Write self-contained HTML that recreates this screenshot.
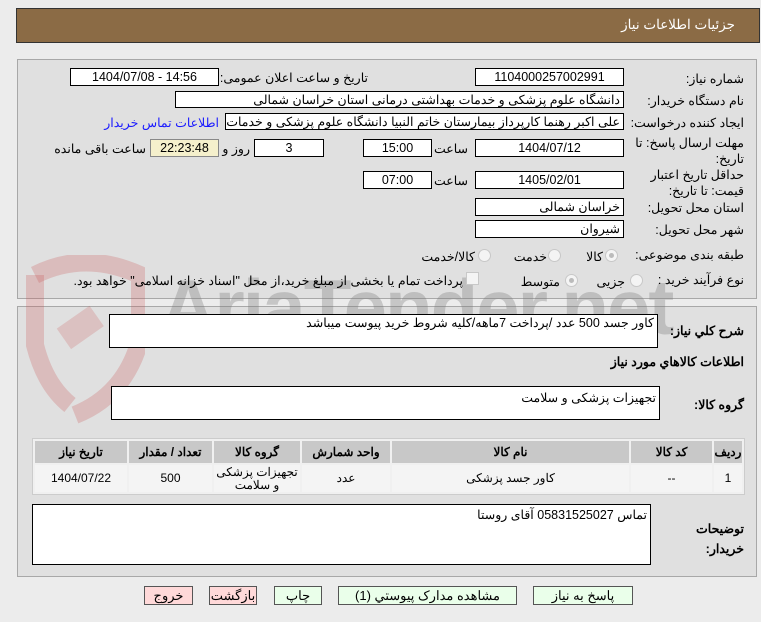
<!DOCTYPE html>
<html><head><meta charset="utf-8"><style>
body{margin:0;width:761px;height:622px;background:#ececec;font-family:Tahoma,"Liberation Sans","Noto Sans CJK SC",sans-serif;font-size:12.5px;color:#000;position:relative;overflow:hidden}
.a{position:absolute}
.lbl{position:absolute;direction:rtl;text-align:right;white-space:nowrap}
.box{position:absolute;background:#fff;border:1px solid #000;box-sizing:border-box;direction:rtl;text-align:center;line-height:16px;white-space:nowrap;overflow:hidden}
.r{text-align:right;padding-right:3px}
.panel{position:absolute;left:17px;width:740px;background:#e0e0e0;border:1px solid #a8a8a8;box-sizing:border-box}
.rad{position:absolute;width:11px;height:11px;border-radius:50%;border:1px solid #c8c8c8;background:#f4f4f4}
.rad.on:after{content:"";position:absolute;left:3px;top:3px;width:5px;height:5px;border-radius:50%;background:#bbb}
table{position:absolute;border-collapse:separate;border-spacing:2px;background:#f0f0f0;border:1px solid #ccc;direction:rtl}
th{background:#c8c8c8;font-weight:bold;height:22px;padding:0;font-size:12px}
td{background:#f4f4f4;text-align:center;height:27px;padding:0;font-size:12px;line-height:13px}
.btn{position:absolute;top:586px;height:19px;border:1px solid #555;box-sizing:border-box;background:#eaffea;text-align:center;line-height:17px;direction:rtl;font-size:13px}
.pink{background:#ffd9d9}
</style></head><body>
<div class="a" style="left:16px;top:8px;width:744px;height:35px;background:#8b6b45;border:1px solid #333;box-sizing:border-box"></div>
<div class="lbl" style="right:26px;top:17px;color:#fff;font-size:13.5px">جزئیات اطلاعات نیاز</div>

<div class="panel" style="top:59px;height:240px"></div>
<div class="panel" style="top:306px;height:271px"></div>

<!-- watermark -->
<svg class="a" style="left:15px;top:255px" width="130" height="170"><path d="M20 20 Q70 -5 125 20 L125 85 Q110 140 60 160" fill="none" stroke="rgba(200,80,80,0.25)" stroke-width="18"/><path d="M20 20 L20 90 Q30 130 55 150" fill="none" stroke="rgba(200,80,80,0.25)" stroke-width="18"/><rect x="45" y="60" width="40" height="25" fill="rgba(200,80,80,0.22)" transform="rotate(-35 65 72)"/></svg>
<div class="a" style="left:160px;top:262px;font-size:78px;font-weight:bold;color:rgba(120,120,120,0.33);font-family:'Liberation Sans',sans-serif;letter-spacing:-2px">AriaTender.net</div>

<div class="lbl" style="right:17px;top:71px">شماره نیاز:</div>
<div class="box" style="left:475px;top:68px;width:149px;height:18px">1104000257002991</div>
<div class="lbl" style="right:393px;top:70px">تاریخ و ساعت اعلان عمومی:</div>
<div class="box" style="left:70px;top:68px;width:149px;height:18px;direction:ltr">1404/07/08 - 14:56</div>

<div class="lbl" style="right:17px;top:93px">نام دستگاه خریدار:</div>
<div class="box r" style="left:175px;top:91px;width:449px;height:17px">دانشگاه علوم پزشکی و خدمات بهداشتی درمانی استان خراسان شمالی</div>

<div class="lbl" style="right:17px;top:115px">ایجاد کننده درخواست:</div>
<div class="box r" style="left:225px;top:113px;width:399px;height:17px">علی اکبر رهنما کارپرداز بیمارستان خاتم النبیا دانشگاه علوم پزشکی و خدمات بهداشتی</div>
<div class="lbl" style="right:542px;top:115px;color:#1a1aff">اطلاعات تماس خریدار</div>

<div class="lbl" style="right:17px;top:135px;line-height:16px">مهلت ارسال پاسخ: تا<br>تاریخ:</div>
<div class="box" style="left:475px;top:139px;width:149px;height:18px">1404/07/12</div>
<div class="lbl" style="right:293px;top:141px">ساعت</div>
<div class="box" style="left:363px;top:139px;width:69px;height:18px">15:00</div>
<div class="box" style="left:254px;top:139px;width:70px;height:18px">3</div>
<div class="lbl" style="right:511px;top:141px">روز و</div>
<div class="box" style="left:150px;top:139px;width:69px;height:18px;background:#f5f0cc;border-color:#888">22:23:48</div>
<div class="lbl" style="right:615px;top:141px">ساعت باقی مانده</div>

<div class="lbl" style="right:17px;top:167px;line-height:16px">حداقل تاریخ اعتبار<br>قیمت: تا تاریخ:</div>
<div class="box" style="left:475px;top:171px;width:149px;height:18px">1405/02/01</div>
<div class="lbl" style="right:293px;top:173px">ساعت</div>
<div class="box" style="left:363px;top:171px;width:69px;height:18px">07:00</div>

<div class="lbl" style="right:17px;top:200px">استان محل تحویل:</div>
<div class="box r" style="left:475px;top:198px;width:149px;height:18px">خراسان شمالی</div>
<div class="lbl" style="right:17px;top:222px">شهر محل تحویل:</div>
<div class="box r" style="left:475px;top:220px;width:149px;height:18px">شیروان</div>

<div class="lbl" style="right:17px;top:247px">طبقه بندی موضوعی:</div>
<div class="rad on" style="left:605px;top:249px"></div><div class="lbl" style="right:158px;top:249px">کالا</div>
<div class="rad" style="left:548px;top:249px"></div><div class="lbl" style="right:214px;top:249px">خدمت</div>
<div class="rad" style="left:478px;top:249px"></div><div class="lbl" style="right:286px;top:249px">کالا/خدمت</div>

<div class="lbl" style="right:17px;top:272px">نوع فرآیند خرید :</div>
<div class="rad" style="left:630px;top:274px"></div><div class="lbl" style="right:136px;top:274px">جزیی</div>
<div class="rad on" style="left:565px;top:274px"></div><div class="lbl" style="right:201px;top:274px">متوسط</div>
<div class="a" style="left:466px;top:272px;width:11px;height:11px;border:1px solid #c8c8c8;background:#f4f4f4"></div>
<div class="lbl" style="right:298px;top:273px">پرداخت تمام یا بخشی از مبلغ خرید،از محل "اسناد خزانه اسلامی" خواهد بود.</div>

<div class="lbl" style="right:17px;top:323px;font-weight:bold">شرح كلي نياز:</div>
<div class="box r" style="left:109px;top:314px;width:549px;height:34px;text-align:right">کاور جسد 500 عدد /پرداخت 7ماهه/کلیه شروط خرید پیوست میباشد</div>
<div class="lbl" style="right:17px;top:354px;font-weight:bold">اطلاعات كالاهاي مورد نياز</div>
<div class="lbl" style="right:17px;top:397px;font-weight:bold">گروه کالا:</div>
<div class="box r" style="left:111px;top:386px;width:549px;height:34px;text-align:right;line-height:22px">تجهیزات پزشکی و سلامت</div>

<table style="left:32px;top:438px;width:713px">
<tr><th style="width:28px">ردیف</th><th style="width:81px">کد کالا</th><th style="width:237px">نام کالا</th><th style="width:88px">واحد شمارش</th><th style="width:86px">گروه کالا</th><th style="width:83px">تعداد / مقدار</th><th>تاریخ نیاز</th></tr>
<tr><td>1</td><td>--</td><td>کاور جسد پزشکی</td><td>عدد</td><td>تجهیزات پزشکی و سلامت</td><td>500</td><td>1404/07/22</td></tr>
</table>

<div class="lbl" style="right:17px;top:519px;font-weight:bold;line-height:20px">توضیحات<br>خریدار:</div>
<div class="box r" style="left:32px;top:504px;width:619px;height:61px;text-align:right;line-height:20px">تماس 05831525027 آقای روستا</div>

<div class="btn" style="left:533px;width:100px">پاسخ به نیاز</div>
<div class="btn" style="left:338px;width:179px">مشاهده مدارک پیوستي (1)</div>
<div class="btn" style="left:274px;width:48px">چاپ</div>
<div class="btn pink" style="left:209px;width:48px">بازگشت</div>
<div class="btn pink" style="left:144px;width:49px">خروج</div>
</body></html>
